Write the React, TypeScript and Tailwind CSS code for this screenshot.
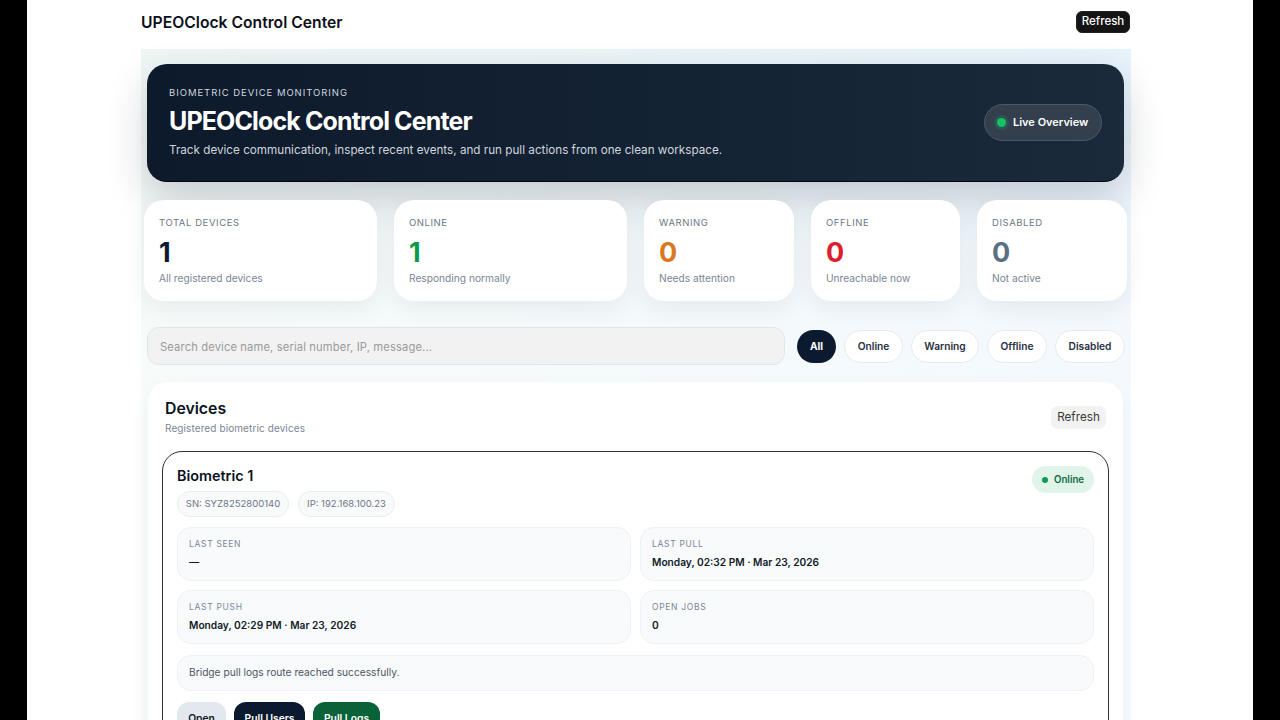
const stats = [
  { label: "TOTAL DEVICES", value: "1", note: "All registered devices", color: "text-[#0b1a2e]", width: "w-[233px]" },
  { label: "ONLINE", value: "1", note: "Responding normally", color: "text-[#0d9a4e]", width: "w-[233px]" },
  { label: "WARNING", value: "0", note: "Needs attention", color: "text-[#d97722]", width: "w-[150px]" },
  { label: "OFFLINE", value: "0", note: "Unreachable now", color: "text-[#dc1f30]", width: "w-[149px]" },
  { label: "DISABLED", value: "0", note: "Not active", color: "text-[#5b7083]", width: "w-[150px]" },
];

const filters = [
  { label: "Online", width: "w-[59px]" },
  { label: "Warning", width: "w-[68px]" },
  { label: "Offline", width: "w-[60px]" },
  { label: "Disabled", width: "w-[70px]" },
];

function InfoBox({ label, value }: { label: string; value: string }) {
  return (
    <div className="h-[54px] rounded-[14px] border border-[#eef1f5] bg-[#f8fafc] px-[11px] pt-[9px]">
      <div className="text-[8.5px] leading-[14px] tracking-[0.08em] text-[#7a8694]">{label}</div>
      <div className="mt-[3px] text-[10.2px] leading-[16px] font-semibold text-[#111a27]">{value}</div>
    </div>
  );
}

export default function App() {
  return (
    <div className="flex h-screen justify-center overflow-hidden bg-black font-['Inter',sans-serif]">
      <div className="h-full w-[1226px] bg-white pl-[114px]">
        <header className="flex h-[49px] w-[990px] items-center justify-between pb-[5px]">
          <h1 className="pt-[1px] text-[15.7px] leading-[22px] font-semibold text-[#0b0f19]">UPEOClock Control Center</h1>
          <button className="mr-[1px] h-[22px] w-[54px] rounded-[6px] border border-[#222] bg-[#141414] text-[11.5px] font-medium text-white">
            Refresh
          </button>
        </header>

        <main className="h-[671px] w-[990px] bg-[linear-gradient(180deg,rgba(255,255,255,0)_0%,rgba(255,255,255,0.6)_55%),linear-gradient(90deg,#eff7f5,#e8f3fc)] px-[6px] pt-[15px]">
          <section className="flex h-[118px] w-[977px] items-center justify-between rounded-[20px] border-b border-[#02060c] bg-gradient-to-r from-[#0d1a2c] to-[#1a2a3a] px-[22px] shadow-[0_16px_40px_rgba(15,23,42,0.2)]">
            <div>
              <div className="text-[9.5px] leading-[14px] tracking-[0.1em] text-[#cdd5df]">BIOMETRIC DEVICE MONITORING</div>
              <h2 className="mt-[5px] text-[25px] leading-[32px] font-bold tracking-[-0.035em] text-white">UPEOClock Control Center</h2>
              <p className="mt-[4px] text-[11.7px] leading-[18px] text-[#d0d6de]">
                Track device communication, inspect recent events, and run pull actions from one clean workspace.
              </p>
            </div>
            <div className="flex h-[37px] w-[118px] items-center rounded-full border border-[#4b5866] bg-[#333f4d] pl-[12px]">
              <span className="h-[9px] w-[9px] rounded-full bg-[#12c264] shadow-[0_0_0_3px_rgba(18,194,100,0.18)]" />
              <span className="ml-[7px] text-[11px] font-semibold text-white">Live Overview</span>
            </div>
          </section>

          <section className="mt-[18px] -ml-[3px] flex w-[983px] gap-[17px]">
            {stats.map((s) => (
              <div key={s.label} className={`h-[101px] shrink-0 rounded-[20px] bg-white px-[15px] pt-[15px] shadow-[0_8px_24px_rgba(15,23,42,0.06)] ${s.width}`}>
                <div className="text-[9.5px] leading-[16px] tracking-[0.06em] text-[#6b7785]">{s.label}</div>
                <div className={`mt-[4px] text-[27px] leading-[36px] font-bold ${s.color}`}>{s.value}</div>
                <div className="-mt-[1px] text-[10.2px] leading-[16px] text-[#7a8594]">{s.note}</div>
              </div>
            ))}
          </section>

          <section className="mt-[26px] flex items-center">
            <input
              readOnly
              placeholder="Search device name, serial number, IP, message..."
              className="h-[38px] w-[639px] rounded-[12px] border border-[#e0e6eb] bg-[#f2f2f2] px-[12px] pt-[2px] text-[11.2px] tracking-[0.012em] placeholder:text-[#9a9a9a]"
            />
            <div className="mt-[1px] ml-[12px] flex gap-[8px]">
              <button className="h-[33px] w-[39px] rounded-full bg-[#0b1a2e] text-[10.2px] font-bold text-white">All</button>
              {filters.map((f) => (
                <button key={f.label} className={`h-[33px] rounded-full border border-[#e5eaf0] bg-white text-[10.2px] font-semibold text-[#27303f] ${f.width}`}>
                  {f.label}
                </button>
              ))}
            </div>
          </section>

          <section className="mt-[17px] ml-[1px] h-[400px] w-[975px] rounded-[20px] bg-white px-[14px] pt-[17px] shadow-[0_8px_24px_rgba(15,23,42,0.04)]">
            <div className="flex items-start justify-between">
              <div className="pl-[3px]">
                <h3 className="text-[15.8px] leading-[20px] font-semibold text-[#0b1220]">Devices</h3>
                <p className="mt-[1px] text-[10px] leading-[16px] tracking-[0.01em] text-[#7a8594]">Registered biometric devices</p>
              </div>
              <button className="mt-[7px] mr-[3px] h-[23px] w-[55px] rounded-[7px] bg-[#f2f2f2] text-[11.7px] text-[#3a3a3a]">Refresh</button>
            </div>

            <div className="mt-[15px] h-[300px] w-[947px] rounded-[20px] border border-[#2c2f36] px-[14px] pt-[14px]">
              <div className="flex items-start justify-between">
                <div>
                  <div className="text-[14.4px] leading-[20px] font-semibold text-[#0b1220]">Biometric 1</div>
                  <div className="mt-[5px] flex gap-[9px]">
                    <span className="flex h-[26px] w-[112px] items-center justify-center rounded-full border border-[#e8ecf1] bg-[#f9fafb] text-[9.5px] text-[#6c7683]">SN: SYZ8252800140</span>
                    <span className="flex h-[26px] w-[97px] items-center justify-center rounded-full border border-[#e8ecf1] bg-[#f9fafb] text-[9.5px] text-[#6c7683]">IP: 192.168.100.23</span>
                  </div>
                </div>
                <div className="flex h-[27px] w-[62px] items-center rounded-full bg-[#e1f4ea] pl-[10px]">
                  <span className="h-[6px] w-[6px] rounded-full bg-[#0b9a55]" />
                  <span className="ml-[6px] pt-[1px] text-[9.7px] font-semibold text-[#0f6b3f]">Online</span>
                </div>
              </div>

              <div className="mt-[10px] grid grid-cols-[454px_454px] gap-x-[9px] gap-y-[9px]">
                <InfoBox label="LAST SEEN" value="—" />
                <InfoBox label="LAST PULL" value="Monday, 02:32 PM · Mar 23, 2026" />
                <InfoBox label="LAST PUSH" value="Monday, 02:29 PM · Mar 23, 2026" />
                <InfoBox label="OPEN JOBS" value="0" />
              </div>

              <div className="mt-[11px] flex h-[36px] w-[917px] items-center rounded-[14px] border border-[#eef1f5] bg-[#f8fafc] px-[11px] text-[10.2px] text-[#4b5563]">
                Bridge pull logs route reached successfully.
              </div>

              <div className="mt-[11px] flex gap-[8px]">
                <button className="h-[34px] w-[49px] rounded-[12px] bg-[#e2e8ee] text-[10.3px] font-semibold text-[#111a27]">Open</button>
                <button className="h-[34px] w-[71px] rounded-[12px] bg-[#0b1a2e] text-[10.3px] font-semibold text-white">Pull Users</button>
                <button className="h-[34px] w-[67px] rounded-[12px] bg-[#0a6238] text-[10.3px] font-semibold text-white">Pull Logs</button>
              </div>
            </div>
          </section>
        </main>
      </div>
    </div>
  );
}
